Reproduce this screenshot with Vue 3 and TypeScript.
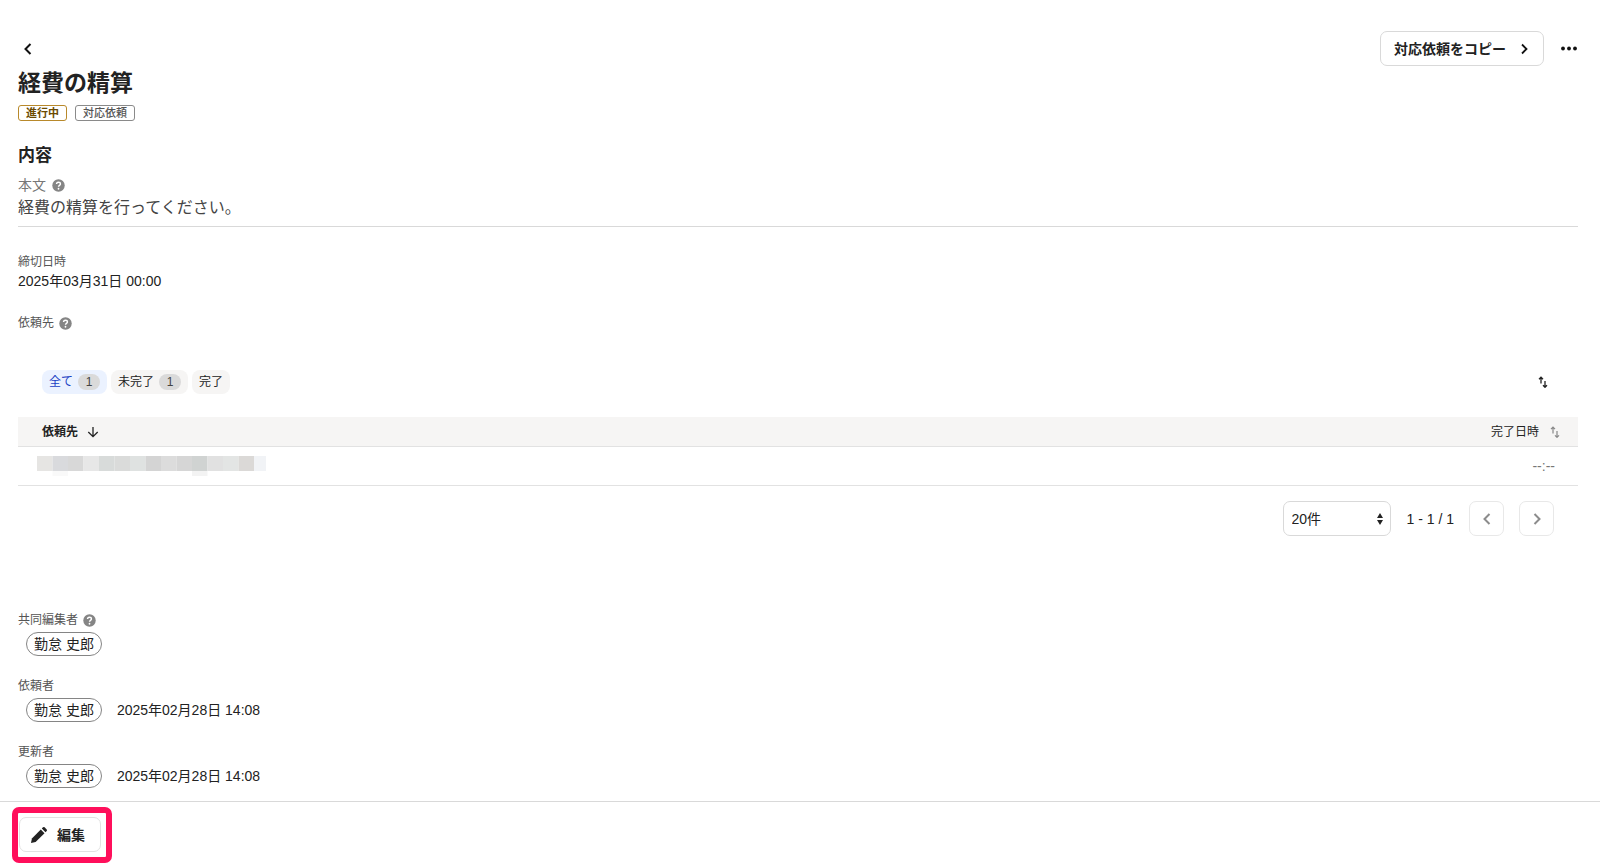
<script setup lang="ts">
import { ref } from 'vue'

interface Filter {
  label: string
  count?: number
}

interface Person {
  label: string
  name: string
  date?: string
  help?: boolean
}

const filters: Filter[] = [
  { label: '全て', count: 1 },
  { label: '未完了', count: 1 },
  { label: '完了' },
]
const activeFilter = ref('全て')
const pageSize = ref('20')

const people: Person[] = [
  { label: '共同編集者', name: '勤怠 史郎', help: true },
  { label: '依頼者', name: '勤怠 史郎', date: '2025年02月28日 14:08' },
  { label: '更新者', name: '勤怠 史郎', date: '2025年02月28日 14:08' },
]

const maskColors: string[] = [
  '#e6e5e3', '#d9dadd', '#d8d8d8', '#e7e7e7', '#d8dbda', '#dadbda', '#dfe2e1', '#d4d4d4',
  '#dcdcdc', '#d6d6d6', '#d0d3d2', '#e1e1e1', '#e3e5e4', '#dbd9d7', '#f1f3f6',
]
</script>

<template>
  <div class="page">
    <main class="content">
      <header class="topbar">
        <button class="plain" type="button" aria-label="戻る">
          <svg width="20" height="20" viewBox="0 0 20 20"><path d="M12.5 5 7.5 10l5 5" fill="none" stroke="#111" stroke-width="2" /></svg>
        </button>
        <div class="actions">
          <button class="button copy" type="button">
            対応依頼をコピー
            <svg width="14" height="14" viewBox="0 0 14 14"><path d="m5 2.500 4.500 4.500-4.500 4.500" fill="none" stroke="#111" stroke-width="1.800" /></svg>
          </button>
          <button class="plain" type="button" aria-label="その他">
            <svg width="17" height="20" viewBox="0 0 17 20" fill="#111"><circle cx="2" cy="9.500" r="1.900" /><circle cx="8" cy="9.500" r="1.900" /><circle cx="14" cy="9.500" r="1.900" /></svg>
          </button>
        </div>
      </header>

      <h1>経費の精算</h1>
      <div class="tags">
        <span class="tag progress">進行中</span>
        <span class="tag">対応依頼</span>
      </div>

      <h2>内容</h2>
      <section class="body-field">
        <div class="label large">
          本文
          <svg class="help" viewBox="0 0 14 14" role="img" aria-label="ヘルプ"><circle cx="7" cy="7" r="6.7" fill="#858585" /><path d="M4.9 5.5c0-1.2.9-2 2.1-2s2.1.8 2.1 1.9c0 1.4-2.1 1.6-2.1 3" fill="none" stroke="#fff" stroke-width="1.5" /><circle cx="7" cy="10.5" r=".95" fill="#fff" /></svg>
        </div>
        <p class="body-text">経費の精算を行ってください。</p>
      </section>

      <section class="deadline">
        <div class="label">締切日時</div>
        <div class="value">2025年03月31日 00:00</div>
      </section>

      <section class="recipients">
        <div class="label">
          依頼先
          <svg class="help" viewBox="0 0 14 14" role="img" aria-label="ヘルプ"><circle cx="7" cy="7" r="6.7" fill="#858585" /><path d="M4.9 5.5c0-1.2.9-2 2.1-2s2.1.8 2.1 1.9c0 1.4-2.1 1.6-2.1 3" fill="none" stroke="#fff" stroke-width="1.5" /><circle cx="7" cy="10.5" r=".95" fill="#fff" /></svg>
        </div>

        <div class="filterbar">
          <div class="filters">
            <button
              v-for="f in filters"
              :key="f.label"
              type="button"
              class="filter"
              :class="{ active: activeFilter === f.label }"
              :aria-pressed="activeFilter === f.label"
              @click="activeFilter = f.label"
            >
              {{ f.label }}<span v-if="f.count" class="count">{{ f.count }}</span>
            </button>
          </div>
          <button class="plain" type="button" aria-label="並べ替え">
            <svg width="10" height="12" viewBox="0 0 10 12" fill="none" stroke="#222" stroke-width="1.300"><path d="M3 7.500V1.500M1 3.200l2-2 2 2M7 5v6M5 9.300l2 2 2-2" /></svg>
          </button>
        </div>

        <table>
          <thead>
            <tr>
              <th scope="col" class="name">
                <span class="head">依頼先
                  <svg width="12" height="12" viewBox="0 0 12 12"><path d="M6 1v9.5M1.3 6 6 10.7 10.7 6" fill="none" stroke="#222" stroke-width="1.3" /></svg>
                </span>
              </th>
              <th scope="col" class="done">
                <span class="head">完了日時
                  <svg width="10" height="12" viewBox="0 0 10 12" fill="none" stroke="#888" stroke-width="1.200"><path d="M3 7.500V1.500M1 3.200l2-2 2 2M7 5v6M5 9.300l2 2 2-2" /></svg>
                </span>
              </th>
            </tr>
          </thead>
          <tbody>
            <tr>
              <td class="name">
                <svg class="mask" viewBox="0 0 229 20" role="img" aria-label="非表示">
                  <rect v-for="(c, i) in maskColors" :key="i" :x="i * 15.5" y="0" width="15.5" height="15" :fill="c" />
                  <path d="M15.5 15H31v5H15.5z" fill="#f9f9f9" /><path d="M155 15h15.5v5H155z" fill="#f3f3f3" />
                </svg>
              </td>
              <td class="done">--:--</td>
            </tr>
          </tbody>
        </table>

        <nav class="pager" aria-label="ページ送り">
          <div class="select">
            <select v-model="pageSize" aria-label="表示件数">
              <option value="20">20件</option>
              <option value="50">50件</option>
            </select>
            <svg width="8" height="12" viewBox="0 0 8 12" fill="#222"><path d="M4 0l3 5H1zM4 12 1 7h6z" /></svg>
          </div>
          <span class="range">1 - 1 / 1</span>
          <button class="button step" type="button" disabled aria-label="前へ">
            <svg width="14" height="14" viewBox="0 0 14 14"><path d="M9.5 2 4.5 7l5 5" fill="none" stroke="#8c8c8c" stroke-width="2" /></svg>
          </button>
          <button class="button step" type="button" disabled aria-label="次へ">
            <svg width="14" height="14" viewBox="0 0 14 14"><path d="m4.5 2 5 5-5 5" fill="none" stroke="#8c8c8c" stroke-width="2" /></svg>
          </button>
        </nav>
      </section>

      <section class="people">
        <div v-for="p in people" :key="p.label">
          <div class="label">
            {{ p.label }}
            <svg v-if="p.help" class="help" viewBox="0 0 14 14" role="img" aria-label="ヘルプ"><circle cx="7" cy="7" r="6.7" fill="#858585" /><path d="M4.9 5.5c0-1.2.9-2 2.1-2s2.1.8 2.1 1.9c0 1.4-2.1 1.6-2.1 3" fill="none" stroke="#fff" stroke-width="1.5" /><circle cx="7" cy="10.5" r=".95" fill="#fff" /></svg>
          </div>
          <div class="person">
            <span class="chip">{{ p.name }}</span>
            <span v-if="p.date" class="value">{{ p.date }}</span>
          </div>
        </div>
      </section>
    </main>

    <footer class="footer">
      <div class="highlight">
        <button class="button edit" type="button">
          <svg width="18" height="18" viewBox="0 0 18 18" fill="#222"><path d="M1 17l.9-4.600L10.800 3.500l3.700 3.700L5.600 16.100z" /><path d="M11.800 2.500l1.200-1.200q.8-.7 1.600 0l2.100 2.100q.7.800 0 1.600l-1.200 1.200z" /></svg>
          編集
        </button>
      </div>
    </footer>
  </div>
</template>

<style>
body {
  margin: 0;
  background: #fff;
}
</style>

<style scoped>
.page {
  box-sizing: border-box;
  min-height: 100vh;
  display: flex;
  flex-direction: column;
  color: #222;
  font: 14px/20px "Liberation Sans", "Noto Sans CJK JP", sans-serif;
}
button,
select {
  font: inherit;
  color: inherit;
}
svg {
  display: block;
  flex: none;
}
.content {
  flex: 1;
  padding: 31px 22px 11px 18px;
}
.topbar,
.actions,
.filterbar,
.filters,
.pager,
.person,
.tags,
.label {
  display: flex;
  align-items: center;
}
.topbar,
.filterbar {
  justify-content: space-between;
}
.plain {
  padding: 0;
  border: 0;
  background: none;
}
.button {
  box-sizing: border-box;
  height: 35px;
  display: flex;
  align-items: center;
  border: 1px solid #d9d9d9;
  border-radius: 7px;
  background: #fff;
  font-weight: 700;
}
.actions {
  gap: 17px;
}
.copy {
  gap: 11px;
  padding: 0 12px 0 13px;
}
h1 {
  margin: 2px 0 7px;
  font-size: 23px;
  line-height: 30px;
}
.tags {
  gap: 8px;
}
.tag {
  box-sizing: border-box;
  height: 16px;
  padding: 0 7px;
  border: 1px solid #8a8a8a;
  border-radius: 3px;
  color: #555;
  font-size: 11px;
  font-weight: 500;
  line-height: 14px;
}
.tag.progress {
  border-color: #b8892b;
  color: #6b4a00;
  font-weight: 700;
}
h2 {
  margin: 23px 0 7px;
  font-size: 17px;
  line-height: 24px;
}
.label {
  gap: 5px;
  color: #555;
  font-size: 12px;
  line-height: 18px;
}
.label.large {
  color: #777;
  font-size: 14px;
  line-height: 20px;
  gap: 6px;
}
.help {
  width: 13px;
  height: 13px;
}
.body-field {
  padding-bottom: 6px;
  border-bottom: 1px solid #d9d9d9;
}
.body-text {
  margin: 1px 0 0;
  color: #444;
  font-size: 16px;
  line-height: 24px;
}
.deadline {
  margin: 26px 0 23px;
}
.filterbar {
  margin-top: 38px;
  padding: 0 30px 0 24px;
}
.filters {
  gap: 4px;
}
.filter {
  height: 24px;
  display: flex;
  align-items: center;
  gap: 5px;
  padding: 0 7px;
  border: 0;
  border-radius: 8px;
  background: #f6f5f4;
  font-size: 12px;
}
.filter.active {
  background: #ebf2ff;
  color: #1a3fc4;
}
.count {
  width: 22px;
  border-radius: 8px;
  background: #dadada;
  color: #444;
  line-height: 16px;
}
table {
  width: 100%;
  margin-top: 23px;
  border-collapse: separate;
  border-spacing: 0;
  font-size: 12px;
}
th,
td {
  box-sizing: border-box;
  padding: 0 24px;
  border-bottom: 1px solid #e2e2e2;
  text-align: left;
}
th {
  height: 30px;
  background: #f6f5f4;
}
td {
  height: 39px;
}
.head {
  display: inline-flex;
  align-items: center;
  gap: 9px;
}
.done {
  text-align: right;
  font-weight: 400;
}
th.done {
  padding-right: 18px;
}
.done .head {
  gap: 11px;
}
td.done {
  padding-right: 23px;
  color: #777;
  font-size: 14px;
}
td.name {
  padding-left: 19px;
}
.mask {
  width: 229px;
  height: 20px;
}
.pager {
  justify-content: flex-end;
  gap: 15px;
  margin-top: 15px;
  padding-right: 24px;
}
.select {
  position: relative;
}
.select select {
  box-sizing: border-box;
  width: 108px;
  height: 35px;
  padding: 0 8px;
  border: 1px solid #d9d9d9;
  border-radius: 7px;
  appearance: none;
  background: #fff;
}
.select svg {
  position: absolute;
  top: 12px;
  right: 7px;
  pointer-events: none;
}
.range {
  padding-left: 1px;
}
.step {
  width: 35px;
  justify-content: center;
  padding: 0;
  border-color: #e8e8e8;
}
.people {
  display: grid;
  gap: 21px;
  margin-top: 75px;
}
.person {
  gap: 15px;
  padding: 3px 0 0 8px;
}
.chip {
  box-sizing: border-box;
  height: 24px;
  padding: 0 7px;
  border: 1px solid #858585;
  border-radius: 12px;
  line-height: 22px;
}
.footer {
  position: sticky;
  bottom: 0;
  display: flex;
  padding: 5px 12px 3px;
  border-top: 1px solid #d9d9d9;
  background: #fff;
}
.highlight {
  padding: 4px 5px 5px 1px;
  border: 6px solid #ff0f5b;
  border-radius: 7px;
}
.edit {
  gap: 9px;
  padding: 0 15px 0 10px;
  border-color: #e2e2e2;
}
</style>
